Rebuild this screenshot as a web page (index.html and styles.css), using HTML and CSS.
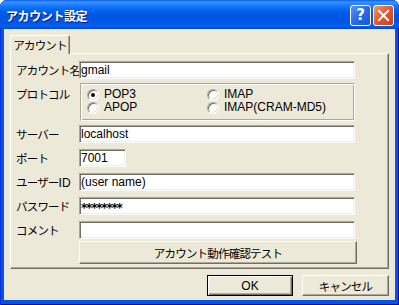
FILE: index.html
```html
<!DOCTYPE html>
<html lang="ja">

<head>
    <meta charset="UTF-8">
    <meta name="viewport" content="width=device-width, initial-scale=1.0">
    <title>アカウント設定</title>
    <link rel="stylesheet" href="styles.css">
</head>

<body>
    <div class="window">
        <div class="titlebar">
            <span class="title">アカウント設定</span>
            <div class="caption-buttons">
                <button class="caption-btn help" title="ヘルプ">?</button>
                <button class="caption-btn close" title="閉じる">
                    <svg width="19" height="19" viewBox="0 0 19 19">
                        <path d="M5 5 L14 14 M14 5 L5 14" stroke="#fff" stroke-width="2" stroke-linecap="square" />
                    </svg>
                </button>
            </div>
        </div>

        <div class="client">
            <div class="tabs">
                <div class="tab ja">アカウント</div>
            </div>

            <div class="tab-page">
                <div class="form">
                    <div class="field">
                        <label class="ja" for="accountName">アカウント名</label>
                        <input class="textbox" type="text" id="accountName" value="gmail">
                    </div>

                    <div class="field protocol-row">
                        <span class="label ja">プロトコル</span>
                        <div class="groupbox">
                            <label class="radio"><span class="radio-circle checked"></span>POP3</label>
                            <label class="radio"><span class="radio-circle"></span>IMAP</label>
                            <label class="radio"><span class="radio-circle"></span>APOP</label>
                            <label class="radio"><span class="radio-circle"></span>IMAP(CRAM-MD5)</label>
                        </div>
                    </div>

                    <div class="field">
                        <label class="ja" for="server">サーバー</label>
                        <input class="textbox" type="text" id="server" value="localhost">
                    </div>

                    <div class="field">
                        <label class="ja" for="port">ポート</label>
                        <input class="textbox port" type="text" id="port" value="7001">
                    </div>

                    <div class="field">
                        <label class="ja" for="userId">ユーザー<span class="latin">ID</span></label>
                        <input class="textbox" type="text" id="userId" value="(user name)">
                    </div>

                    <div class="field">
                        <label class="ja" for="password">パスワード</label>
                        <input class="textbox secret" type="text" id="password" value="********">
                    </div>

                    <div class="field">
                        <label class="ja" for="comment">コメント</label>
                        <input class="textbox" type="text" id="comment" value="">
                    </div>

                    <div class="field test-row">
                        <span></span>
                        <button class="btn test-btn ja">アカウント動作確認テスト</button>
                    </div>
                </div>
            </div>

            <div class="dialog-buttons">
                <button class="btn default">OK</button>
                <button class="btn ja">キャンセル</button>
            </div>
        </div>
    </div>
</body>

</html>
```

FILE: styles.css
```css
* {
    box-sizing: border-box;
}

body {
    margin: 0;
    background: #fff;
    font-family: "Liberation Sans", "Noto Sans CJK JP", sans-serif;
    font-size: 12px;
    color: #000;
}

.ja {
    font-family: "Noto Sans CJK JP", sans-serif;
    font-size: 11.5px;
    letter-spacing: -0.8px;
}

.latin {
    font-family: "Liberation Sans", sans-serif;
    font-size: 12px;
    letter-spacing: 0;
}

.window {
    width: 399px;
    height: 305px;
    display: flex;
    flex-direction: column;
    padding: 0 4px 5px;
    background: #0553e6;
    border-radius: 7px 7px 0 0;
    box-shadow: inset 1px 0 #0831d9, inset -1px 0 #00138c, inset 0 -1px #00138c;
}

/* title bar */
.titlebar {
    height: 29px;
    margin: 0 -4px;
    padding: 5px 5px 0 6px;
    display: flex;
    align-items: flex-start;
    border-radius: 7px 7px 0 0;
    background: linear-gradient(to bottom,
            #0a5ee8 0%, #3d92ff 7%, #2b88ff 12%, #1475fa 22%,
            #0564ef 35%, #0058e6 50%, #0055e3 65%, #0058ea 80%,
            #0361f2 90%, #0052dd 96%, #003dc2 100%);
}

.title {
    flex: 1;
    line-height: 21px;
    color: #fff;
    font-family: "Noto Sans CJK JP", sans-serif;
    font-weight: bold;
    font-size: 12px;
    letter-spacing: -0.4px;
    text-shadow: 1px 1px #0a1b8a;
}

.caption-buttons {
    display: flex;
    gap: 2px;
}

.caption-btn {
    width: 21px;
    height: 21px;
    padding: 0;
    border: 1px solid #fff;
    border-radius: 3px;
    color: #fff;
    display: flex;
    align-items: center;
    justify-content: center;
}

.help {
    background: linear-gradient(135deg, #5b95f7 0%, #2a68ea 50%, #1c55d6 100%);
    font-family: "DejaVu Sans", sans-serif;
    font-weight: bold;
    font-size: 15px;
    line-height: 19px;
}

.close {
    background: linear-gradient(135deg, #f09a78 0%, #e35d35 45%, #c83c16 100%);
}

/* client area */
.client {
    flex: 1;
    padding: 6px 6px 0;
    background: #ece9d8;
    display: flex;
    flex-direction: column;
}

.tabs {
    display: flex;
    height: 18px;
}

.tab {
    position: relative;
    z-index: 1;
    width: 60px;
    height: 19px;
    padding-top: 1px;
    text-align: center;
    line-height: 16px;
    background: #ece9d8;
    border: 1px solid;
    border-bottom: none;
    border-color: #fff #716f64 transparent #fff;
    box-shadow: inset -1px 0 #aca899;
    border-radius: 2px 2px 0 0;
}

.tab-page {
    height: 216px;
    padding: 7px 0 0 5px;
    border: 1px solid;
    border-color: #fff #716f64 #716f64 #fff;
    box-shadow: inset -1px -1px #aca899;
}

.form {
    display: flex;
    flex-direction: column;
    gap: 6px;
}

.field {
    display: grid;
    grid-template-columns: 63px 276px;
    align-items: center;
}

.field label,
.field .label {
    white-space: nowrap;
}

.protocol-row {
    margin: -2px 0;
    align-items: start;
}

.protocol-row .label {
    padding-top: 3px;
}

.test-row {
    margin-top: -4px;
}

.textbox {
    width: 276px;
    height: 18px;
    padding: 0 1px;
    font: inherit;
    color: #000;
    background: #fff;
    border: 1px solid;
    border-color: #aca899 #fff #fff #aca899;
    box-shadow: inset 1px 1px #716f64, inset -1px -1px #f1efe2;
    outline: none;
}

.textbox.port {
    width: 47px;
}

.textbox.secret {
    padding: 4px 1px 0;
    font-family: "DejaVu Sans", sans-serif;
    font-weight: bold;
    font-size: 12px;
    letter-spacing: -1.2px;
}

/* protocol group */
.groupbox {
    height: 38px;
    margin-left: 1px;
    padding: 4px 0 0 6px;
    display: grid;
    grid-template-columns: 120px 1fr;
    grid-auto-rows: 13px;
    border: 1px solid;
    border-color: #aca899 #fff #fff #aca899;
    box-shadow: inset 1px 1px #fff, inset -1px -1px #aca899;
}

.radio {
    display: flex;
    align-items: center;
    gap: 5px;
    line-height: 13px;
}

.radio-circle {
    position: relative;
    width: 12px;
    height: 12px;
    border-radius: 50%;
    background: #fff;
    border: 1px solid;
    border-color: #aca899 #fff #fff #aca899;
    box-shadow: inset 1px 1px #716f64, inset -1px -1px #e2dfd1;
}

.radio-circle.checked::after {
    content: "";
    position: absolute;
    left: 3px;
    top: 3px;
    width: 4px;
    height: 4px;
    border-radius: 50%;
    background: #000;
}

/* buttons */
.btn {
    height: 21px;
    padding: 0;
    font-family: inherit;
    font-size: 12px;
    color: #000;
    background: #ece9d8;
    border: 1px solid;
    border-color: #fff #716f64 #716f64 #fff;
    box-shadow: inset -1px -1px #aca899;
}

.btn.ja {
    font-family: "Noto Sans CJK JP", sans-serif;
    font-size: 11.5px;
    letter-spacing: -0.8px;
}

.test-btn {
    width: 278px;
    height: 23px;
}

.btn.default {
    border-color: #000;
    box-shadow: inset 1px 1px #fff, inset -1px -1px #716f64, inset -2px -2px #aca899;
}

.dialog-buttons {
    display: flex;
    justify-content: flex-end;
    gap: 9px;
    margin-top: 6px;
}

.dialog-buttons .btn {
    width: 86px;
}

.dialog-buttons .btn.ja {
    width: 87px;
}
```
